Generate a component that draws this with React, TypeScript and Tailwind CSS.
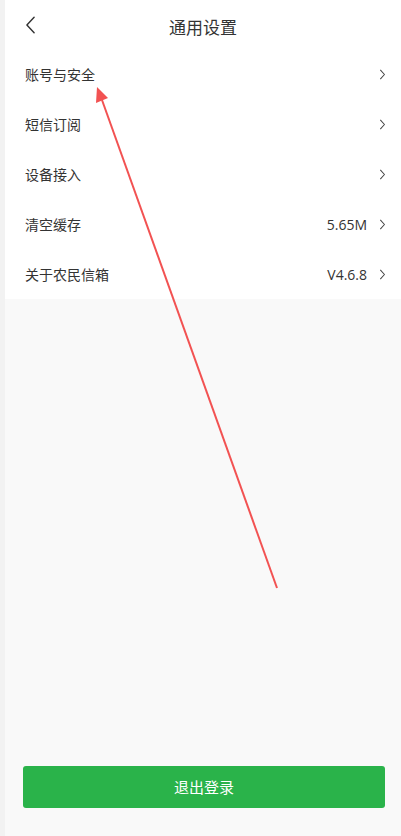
import React from "react";

const rows = [
  { label: "账号与安全", value: "" },
  { label: "短信订阅", value: "" },
  { label: "设备接入", value: "" },
  { label: "清空缓存", value: "5.65M" },
  { label: "关于农民信箱", value: "V4.6.8" },
];

const Chevron = ({ className }: { className?: string }) => (
  <svg viewBox="0 0 8 14" className={className} fill="none" stroke="#444" strokeWidth="1.3" strokeLinecap="round" strokeLinejoin="round">
    <path d="M1.5 1.5 L6.5 7 L1.5 12.5" />
  </svg>
);

export default function App() {
  return (
    <div
      className="relative flex h-[836px] w-[401px] flex-col border-l-[5px] border-[#f2f2f2] bg-[#f9f9f9] text-[#333]"
      style={{ fontFamily: '"Noto Sans CJK SC", "Noto Sans", sans-serif' }}
    >
      <div className="bg-white">
        <div className="relative flex h-[49px] items-center justify-center">
          <svg viewBox="0 0 12 20" className="absolute left-[20px] top-[16px] h-[18px] w-[11px]" fill="none" stroke="#333" strokeWidth="1.6" strokeLinecap="round" strokeLinejoin="round">
            <path d="M10 1.5 L2 10 L10 18.5" />
          </svg>
          <span className="mt-[4px] text-[17px] leading-none">通用设置</span>
        </div>
        {rows.map((r) => (
          <div key={r.label} className="flex h-[50px] items-center pl-[20px] pr-[15px]">
            <span className="flex-1 text-[14px]">{r.label}</span>
            {r.value && <span className="mr-[12px] text-[14px]" style={{ fontFamily: '"Open Sans", "Noto Sans", sans-serif' }}>{r.value}</span>}
            <Chevron className="h-[11px] w-[7px]" />
          </div>
        ))}
      </div>
      <div className="flex-1" />
      <div className="mb-[28px] ml-[18px] mr-[16px] flex h-[42px] items-center justify-center rounded-[3px] bg-[#2ab34a] text-[15px] text-white">
        退出登录
      </div>
      <svg className="pointer-events-none absolute left-[-5px] top-0" width="401" height="836" viewBox="0 0 401 836">
        <line x1="277" y1="588" x2="102" y2="100" stroke="#f25252" strokeWidth="2" />
        <polygon points="97,87 96,103 108,98" fill="#f25252" />
      </svg>
    </div>
  );
}
